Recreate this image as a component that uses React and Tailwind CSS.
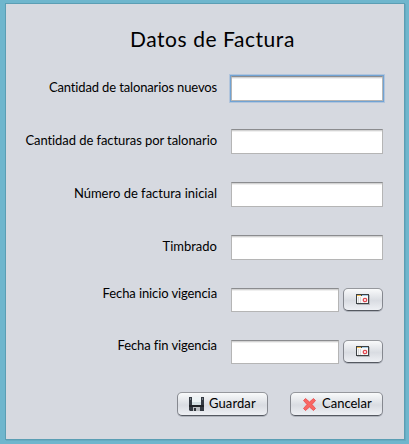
import React from "react";

const FONT = "font-['Lato','Open_Sans',sans-serif] [font-variant-ligatures:none]";

function Field({ focused = false, className = "" }) {
  return (
    <input
      className={`block rounded-none border border-[#b5b5b5] border-t-[#8b8c8f] bg-white px-1 text-[13px] outline-none ${
        focused
          ? "shadow-[inset_0_1px_0_#d3d3d3,inset_0_2px_0_#efefef,0_0_0_1px_#71a3d4,0_0_0_2px_#b2c5dc]"
          : "shadow-[inset_0_1px_0_#d3d3d3,inset_0_2px_0_#efefef]"
      } ${className}`}
    />
  );
}

function Label({ children, className = "" }) {
  return (
    <label className={`mr-[14px] block w-[211px] shrink-0 whitespace-nowrap text-right text-[13px] leading-[16px] text-black ${className}`}>
      {children}
    </label>
  );
}

function Button({ children, className = "" }) {
  return (
    <button
      className={`flex items-center rounded-[5px] border border-[#85888f] border-t-[#96989d] border-b-[#555961] bg-linear-to-b from-[#f9fafb] via-[#d9dce2] via-55% to-[#eef0f4] shadow-[0_1px_0_#b0b4bc] ${className}`}
    >
      {children}
    </button>
  );
}

function CalendarIcon() {
  return (
    <svg width="14" height="11" viewBox="0 0 14 11" className="block shrink-0">
      <path d="M1 10h12V1h1v10H1z" fill="#b5b7ba" />
      <rect width="13" height="10" fill="#3c4144" />
      <rect x="1" y="2" width="11" height="7" fill="#f8f8f8" />
      <rect x="1" y="1" width="4" height="1" fill="#f0b84a" />
      <rect x="6" y="1" width="6" height="1" fill="#a5cde8" />
      <path d="M2 3h1v6H2zM4 3h1v6H4z" fill="#d8d8d8" />
      <circle cx="9" cy="6" r="1.7" fill="#fff" stroke="#e04850" strokeWidth="1.3" />
    </svg>
  );
}

function SaveIcon() {
  return (
    <svg width="15" height="15" viewBox="0 0 15 15" className="block shrink-0">
      <path d="M0 0h15v14H1L0 13z" fill="#343a42" />
      <path d="M3 0h9v8H3z" fill="#edf3f5" />
      <path d="M3 5h9v3H3z" fill="#d3dfe2" />
      <path d="M0 8h15v2H0z" fill="#202327" />
      <path d="M4 10h7v4H4z" fill="#b9bdc0" />
      <path d="M5 11h2v3H5z" fill="#30343a" />
      <path d="M1 1h1v2H1zM13 1h1v2h-1z" fill="#777f87" />
    </svg>
  );
}

function CancelIcon() {
  return (
    <svg width="13" height="13" viewBox="0 0 13 13" className="block shrink-0">
      <path
        d="M2.5.5 6.5 4 10.5.5l2 2L9 6.5l3.5 4-2 2-4-3.5-4 3.5-2-2L4 6.5.5 2.5z"
        fill="#f96762"
        stroke="#e9484b"
        strokeWidth=".8"
        strokeLinejoin="round"
      />
    </svg>
  );
}

export default function App() {
  return (
    <div className={`h-[444px] w-[409px] overflow-hidden bg-[#6fb6cd] pl-[5px] pt-[3px] ${FONT}`}>
      <main className="h-[437px] w-[400px] border border-[#5b9eb4] bg-[#d6d9e0] shadow-[1px_1px_0_#66abc1]">
        <h1 className="ml-[124px] mt-[21px] h-[28px] whitespace-nowrap text-[21px] leading-[28px] tracking-[0.55px] text-black">
          Datos de Factura
        </h1>
        <form className="mt-[23px]">
          <div className="flex h-[53px]">
            <Label className="mt-[3px] tracking-[-0.14px]">Cantidad de talonarios nuevos</Label>
            <Field focused className="h-[25px] w-[152px]" />
          </div>
          <div className="flex h-[53px]">
            <Label className="mt-[3px] tracking-[-0.07px]">Cantidad de facturas por talonario</Label>
            <Field className="h-[25px] w-[152px]" />
          </div>
          <div className="flex h-[53px]">
            <Label className="mt-[3px]">Número de factura inicial</Label>
            <Field className="h-[25px] w-[152px]" />
          </div>
          <div className="flex h-[53px]">
            <Label className="mt-[3px]">Timbrado</Label>
            <Field className="h-[25px] w-[152px]" />
          </div>
          <div className="flex h-[52px]">
            <Label className="-mt-[3px] tracking-[-0.1px]">Fecha inicio vigencia</Label>
            <Field className="h-[24px] w-[108px]" />
            <Button className="ml-1 h-[23px] w-[40px] justify-center"><CalendarIcon /></Button>
          </div>
          <div className="flex h-[52px]">
            <Label className="-mt-[3px] tracking-[-0.1px]">Fecha fin vigencia</Label>
            <Field className="h-[24px] w-[108px]" />
            <Button className="ml-1 h-[23px] w-[40px] justify-center"><CalendarIcon /></Button>
          </div>
          <div className="flex pl-[171px] text-[13px] text-black">
            <Button className="h-[24px] w-[91px] gap-[5px] pl-[11px]"><SaveIcon /><span className="tracking-[0.1px]">Guardar</span></Button>
            <Button className="ml-[22px] h-[24px] w-[93px] gap-[6px] pl-[12px]"><CancelIcon /><span>Cancelar</span></Button>
          </div>
        </form>
      </main>
    </div>
  );
}
